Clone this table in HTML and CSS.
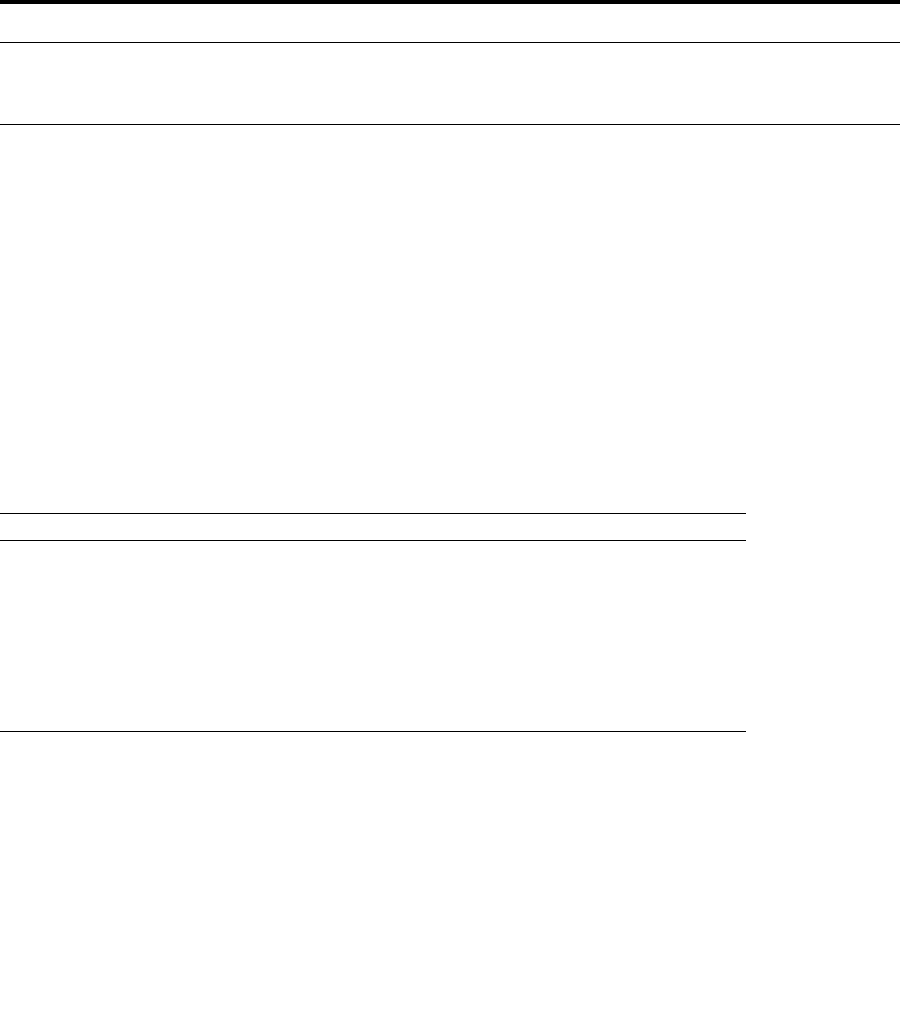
FILE: index.html
```html
<!DOCTYPE html>
<html lang="en">
<head>
<meta charset="utf-8">
<title>Page</title>
<link rel="stylesheet" href="styles.css">
</head>
<body>
<div class="topbar"></div>
<header class="masthead"></header>
<main class="content">
  <section class="table-block">
    <div class="table-head"></div>
    <div class="table-body"></div>
  </section>
</main>
</body>
</html>
```
FILE: styles.css
```css
html, body {
  margin: 0;
  padding: 0;
  background: #ffffff;
  font-family: "Liberation Sans", Arial, sans-serif;
}
.topbar {
  height: 4px;
  background: #000000;
}
.masthead {
  margin-top: 38px;
  height: 81px;
  border-top: 1px solid #000000;
  border-bottom: 1px solid #000000;
}
.content {
  padding-top: 388px;
}
.table-block {
  width: 746px;
  border-top: 1px solid #000000;
  border-bottom: 1px solid #000000;
}
.table-head {
  height: 26px;
  border-bottom: 1px solid #000000;
}
.table-body {
  height: 190px;
}
```
